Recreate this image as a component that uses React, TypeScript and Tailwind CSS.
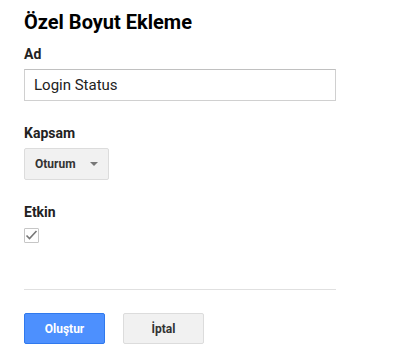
export default function App() {
  return (
    <div className="w-[397px] h-[363px] bg-white px-6 font-['Roboto',sans-serif] text-[#222]">
      <h1 className="pt-[9px] text-[20px] leading-[26px] font-bold text-black">Özel Boyut Ekleme</h1>
      <div className="mt-[10px] text-[14px] leading-[18px] font-bold">Ad</div>
      <input
        type="text"
        defaultValue="Login Status"
        className="mt-[6px] block w-[312px] h-[32px] px-[9px] border border-[#d0d0d0] border-t-[#c0c0c0] text-[15px] text-[#222] outline-none"
      />
      <div className="mt-[23px] text-[14px] leading-[18px] font-bold">Kapsam</div>
      <div className="mt-[6px] flex items-center justify-between w-[85px] h-[32px] pl-[10px] pr-[10px] bg-[#f1f1f1] border border-[#dcdcdc] rounded-[2px]">
        <span className="text-[12px] font-bold text-[#333]">Oturum</span>
        <span className="w-0 h-0 border-l-[4px] border-r-[4px] border-t-[4px] border-l-transparent border-r-transparent border-t-[#777]" />
      </div>
      <div className="mt-[23px] text-[14px] leading-[18px] font-bold">Etkin</div>
      <div className="mt-[7px] w-[15px] h-[15px] border border-[#c6c6c6] rounded-[1px] flex items-center justify-center">
        <svg width="13" height="11" viewBox="0 0 13 11">
          <path d="M1.5 5.5 L4.5 8.5 L11.5 1" fill="none" stroke="#777" strokeWidth="1.6" />
        </svg>
      </div>
      <div className="mt-[46px] w-[312px] h-px bg-[#e0e0e0]" />
      <div className="mt-[23px] flex gap-[18px]">
        <button className="w-[81px] h-[31px] rounded-[2px] bg-[#4d90fe] border border-[#3079ed] text-white text-[12px] font-bold">
          Oluştur
        </button>
        <button className="w-[81px] h-[31px] rounded-[2px] bg-[#f1f1f1] border border-[#dcdcdc] text-[#333] text-[12px] font-bold">
          İptal
        </button>
      </div>
    </div>
  );
}
